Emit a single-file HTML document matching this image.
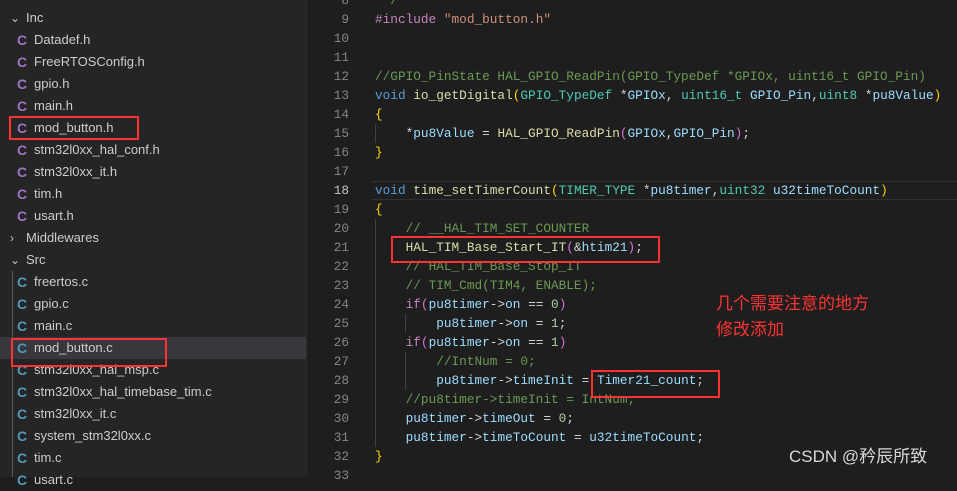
<!DOCTYPE html>
<html><head><meta charset="utf-8"><style>
*{margin:0;padding:0;box-sizing:border-box}
body{width:957px;height:477px;overflow:hidden;background:#1e1e1e;position:relative;font-family:"Liberation Sans",sans-serif}
#side{position:absolute;left:0;top:0;width:306px;height:477px;background:#252526}
#strip{position:absolute;left:306px;top:0;width:14px;height:477px;background:#1e1e1e;border-left:1px solid #2b2b2b}
.r{position:absolute;left:0;width:306px;height:22px;line-height:22px;font-size:13px;color:#cccccc}
.r .c{position:absolute;left:17px;font-weight:bold;font-size:14px}
.r .t{position:absolute;left:34px}
.h .c{color:#a074c4}.cc .c{color:#519aba}
.f{position:absolute;left:26px}
.chev{position:absolute;left:10px;top:0;color:#c5c5c5;font-size:12px}
.box{position:absolute;border:2px solid #f33}
.ln{position:absolute;left:320px;width:29px;text-align:right;font-family:"Liberation Mono",monospace;font-size:12.75px;color:#858585;height:19px;line-height:19px}
.cl{position:absolute;left:375px;font-family:"Liberation Mono",monospace;font-size:12.75px;color:#d4d4d4;white-space:pre;height:19px;line-height:19px}
.cm{color:#6a9955}.kw{color:#569cd6}.fn{color:#dcdcaa}.ty{color:#4ec9b0}.v{color:#9cdcfe}.s{color:#ce9178}.pp{color:#c586c0}.b{color:#ffd700}.p{color:#da70d6}.n{color:#b5cea8}
.g{position:absolute;width:1px;background:#404040}
</style></head><body>
<div id="side"></div><div id="strip"></div>
<div class="r" style="top:-15px"><span class="chev">›</span><span class="f" style="color:#ccc">Drivers</span></div>
<div class="r" style="top:7px"><span class="chev">⌄</span><span class="f">Inc</span></div>
<div class="r h" style="top:29px"><span class="c">C</span><span class="t">Datadef.h</span></div>
<div class="r h" style="top:51px"><span class="c">C</span><span class="t">FreeRTOSConfig.h</span></div>
<div class="r h" style="top:73px"><span class="c">C</span><span class="t">gpio.h</span></div>
<div class="r h" style="top:95px"><span class="c">C</span><span class="t">main.h</span></div>
<div class="r h" style="top:117px"><span class="c">C</span><span class="t">mod_button.h</span></div>
<div class="r h" style="top:139px"><span class="c">C</span><span class="t">stm32l0xx_hal_conf.h</span></div>
<div class="r h" style="top:161px"><span class="c">C</span><span class="t">stm32l0xx_it.h</span></div>
<div class="r h" style="top:183px"><span class="c">C</span><span class="t">tim.h</span></div>
<div class="r h" style="top:205px"><span class="c">C</span><span class="t">usart.h</span></div>
<div class="r" style="top:227px"><span class="chev">›</span><span class="f">Middlewares</span></div>
<div class="r" style="top:249px"><span class="chev">⌄</span><span class="f">Src</span></div>
<div class="g" style="left:12px;top:271px;height:206px;background:#585858"></div>
<div class="r cc" style="top:271px"><span class="c">C</span><span class="t">freertos.c</span></div>
<div class="r cc" style="top:293px"><span class="c">C</span><span class="t">gpio.c</span></div>
<div class="r cc" style="top:315px"><span class="c">C</span><span class="t">main.c</span></div>
<div class="r cc" style="top:337px;background:#37373d"><span class="c">C</span><span class="t">mod_button.c</span></div>
<div class="r cc" style="top:359px"><span class="c">C</span><span class="t">stm32l0xx_hal_msp.c</span></div>
<div class="r cc" style="top:381px"><span class="c">C</span><span class="t">stm32l0xx_hal_timebase_tim.c</span></div>
<div class="r cc" style="top:403px"><span class="c">C</span><span class="t">stm32l0xx_it.c</span></div>
<div class="r cc" style="top:425px"><span class="c">C</span><span class="t">system_stm32l0xx.c</span></div>
<div class="r cc" style="top:447px"><span class="c">C</span><span class="t">tim.c</span></div>
<div class="r cc" style="top:469px"><span class="c">C</span><span class="t">usart.c</span></div>
<div class="box" style="left:9px;top:116px;width:130px;height:24px"></div>
<div class="box" style="left:11px;top:338px;width:156px;height:29px"></div>

<div style="position:absolute;left:372px;top:181px;width:585px;height:19px;border-top:1px solid #303030;border-bottom:1px solid #303030"></div>
<div class="g" style="left:375px;top:124px;height:19px"></div>
<div class="g" style="left:375px;top:219px;height:228px"></div>
<div class="g" style="left:405px;top:314px;height:19px"></div>
<div class="g" style="left:405px;top:352px;height:38px"></div>

<div class="ln" style="top:-9px">8</div><div class="cl" style="top:-9px"><span class="cm"> */</span></div>
<div class="ln" style="top:10px">9</div><div class="cl" style="top:10px"><span class="pp">#include</span> <span class="s">"mod_button.h"</span></div>
<div class="ln" style="top:29px">10</div>
<div class="ln" style="top:48px">11</div>
<div class="ln" style="top:67px">12</div><div class="cl" style="top:67px"><span class="cm">//GPIO_PinState HAL_GPIO_ReadPin(GPIO_TypeDef *GPIOx, uint16_t GPIO_Pin)</span></div>
<div class="ln" style="top:86px">13</div><div class="cl" style="top:86px"><span class="kw">void</span> <span class="fn">io_getDigital</span><span class="b">(</span><span class="ty">GPIO_TypeDef</span> *<span class="v">GPIOx</span>, <span class="ty">uint16_t</span> <span class="v">GPIO_Pin</span>,<span class="ty">uint8</span> *<span class="v">pu8Value</span><span class="b">)</span></div>
<div class="ln" style="top:105px">14</div><div class="cl" style="top:105px"><span class="b">{</span></div>
<div class="ln" style="top:124px">15</div><div class="cl" style="top:124px">    *<span class="v">pu8Value</span> = <span class="fn">HAL_GPIO_ReadPin</span><span class="p">(</span><span class="v">GPIOx</span>,<span class="v">GPIO_Pin</span><span class="p">)</span>;</div>
<div class="ln" style="top:143px">16</div><div class="cl" style="top:143px"><span class="b">}</span></div>
<div class="ln" style="top:162px">17</div>
<div class="ln" style="top:181px;color:#c6c6c6">18</div><div class="cl" style="top:181px"><span class="kw">void</span> <span class="fn">time_setTimerCount</span><span class="b">(</span><span class="ty">TIMER_TYPE</span> *<span class="v">pu8timer</span>,<span class="ty">uint32</span> <span class="v">u32timeToCount</span><span class="b">)</span></div>
<div class="ln" style="top:200px">19</div><div class="cl" style="top:200px"><span class="b">{</span></div>
<div class="ln" style="top:219px">20</div><div class="cl" style="top:219px">    <span class="cm">// __HAL_TIM_SET_COUNTER</span></div>
<div class="ln" style="top:238px">21</div><div class="cl" style="top:238px">    <span class="fn">HAL_TIM_Base_Start_IT</span><span class="p">(</span>&amp;<span class="v">htim21</span><span class="p">)</span>;</div>
<div class="ln" style="top:257px">22</div><div class="cl" style="top:257px">    <span class="cm">// HAL_TIM_Base_Stop_IT</span></div>
<div class="ln" style="top:276px">23</div><div class="cl" style="top:276px">    <span class="cm">// TIM_Cmd(TIM4, ENABLE);</span></div>
<div class="ln" style="top:295px">24</div><div class="cl" style="top:295px">    <span class="pp">if</span><span class="p">(</span><span class="v">pu8timer</span>-&gt;<span class="v">on</span> == <span class="n">0</span><span class="p">)</span></div>
<div class="ln" style="top:314px">25</div><div class="cl" style="top:314px">        <span class="v">pu8timer</span>-&gt;<span class="v">on</span> = <span class="n">1</span>;</div>
<div class="ln" style="top:333px">26</div><div class="cl" style="top:333px">    <span class="pp">if</span><span class="p">(</span><span class="v">pu8timer</span>-&gt;<span class="v">on</span> == <span class="n">1</span><span class="p">)</span></div>
<div class="ln" style="top:352px">27</div><div class="cl" style="top:352px">        <span class="cm">//IntNum = 0;</span></div>
<div class="ln" style="top:371px">28</div><div class="cl" style="top:371px">        <span class="v">pu8timer</span>-&gt;<span class="v">timeInit</span> = <span class="v">Timer21_count</span>;</div>
<div class="ln" style="top:390px">29</div><div class="cl" style="top:390px">    <span class="cm">//pu8timer-&gt;timeInit = IntNum;</span></div>
<div class="ln" style="top:409px">30</div><div class="cl" style="top:409px">    <span class="v">pu8timer</span>-&gt;<span class="v">timeOut</span> = <span class="n">0</span>;</div>
<div class="ln" style="top:428px">31</div><div class="cl" style="top:428px">    <span class="v">pu8timer</span>-&gt;<span class="v">timeToCount</span> = <span class="v">u32timeToCount</span>;</div>
<div class="ln" style="top:447px">32</div><div class="cl" style="top:447px"><span class="b">}</span></div>
<div class="ln" style="top:466px">33</div>

<div class="box" style="left:391px;top:236px;width:269px;height:27px"></div>
<div class="box" style="left:591px;top:370px;width:129px;height:28px"></div>
<div style="position:absolute;left:716px;top:291px;color:#f33;font-size:17px;line-height:26px;font-family:'Liberation Sans','Noto Sans CJK SC',sans-serif">几个需要注意的地方<br>修改添加</div>
<div style="position:absolute;left:789px;top:446px;color:#d8d8d8;font-size:17px;line-height:22px;font-family:'Liberation Sans','Noto Sans CJK SC',sans-serif">CSDN @矜辰所致</div>
</body></html>
